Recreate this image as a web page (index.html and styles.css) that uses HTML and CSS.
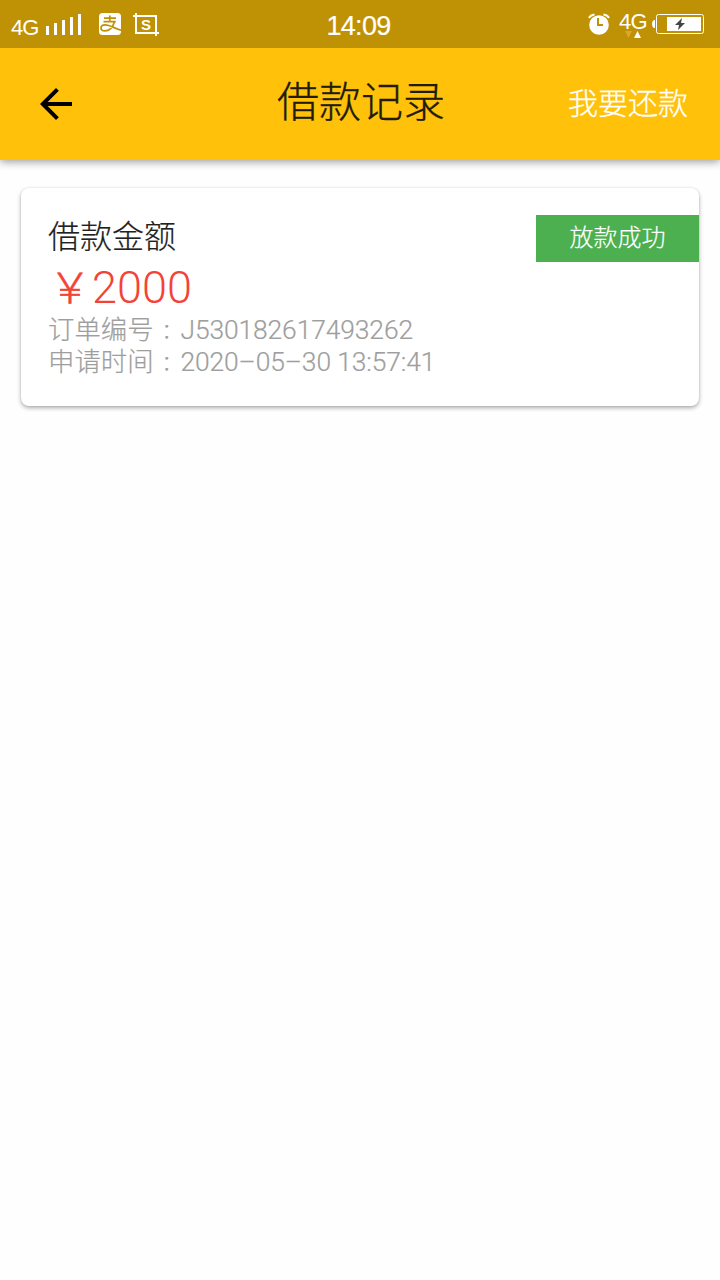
FILE: index.html
```html
<!DOCTYPE html>
<html lang="zh-CN">
<head>
<meta charset="utf-8">
<title>借款记录</title>
<link rel="stylesheet" href="styles.css">
</head>
<body>
<header class="status">
  <div class="status-left">
    <span class="net">4G</span>
    <svg class="signal" width="36" height="22" viewBox="0 0 36 22" fill="#fff"><path d="M0 12h3v9H0zM8 9h3v12H8zM16 6h3v15h-3zM24 3h3v18h-3zM32 0h3v21h-3z"/></svg>
    <svg class="pay" width="22" height="22" viewBox="0 0 22 22"><rect width="22" height="22" rx="3.5" fill="#fff"/><path d="M5 5.200h12M10.800 2.500v6M4.500 8.700h12.300M15.300 9c-1.300 5.500-5.300 8.900-9.300 8.900-2.500 0-4-1.200-4-2.900 0-2 1.800-3.100 4.200-3.100 4.500 0 9.500 3.600 15.800 5.200" fill="none" stroke="#bf9105" stroke-width="1.700"/></svg>
    <svg class="shot" width="26" height="24" viewBox="0 0 26 24" fill="none" stroke="#fff" stroke-width="2"><path d="M0 3h23v17M3 0v20h23M23 20v3"/><text x="13" y="16.500" class="shot-letter">S</text></svg>
  </div>
  <span class="clock">14:09</span>
  <div class="status-right">
    <svg class="alarm" width="22" height="22" viewBox="0 0 22 22"><circle cx="11" cy="12" r="9.800" fill="#fff"/><path d="M1 5Q2.500 2 6.500 1.500M21 5Q19.500 2 15.500 1.500" fill="none" stroke="#fff" stroke-width="2"/><path d="M10 5v7h5" fill="none" stroke="#bf9105" stroke-width="2"/></svg>
    <div class="data"><span>4G</span><svg width="18" height="7" viewBox="0 0 18 7"><path d="M1 0h7L4.500 7z" fill="#d9a72c"/><path d="M10 7h7L13.500 0z" fill="#fff"/></svg></div>
    <svg class="battery" width="52" height="20" viewBox="0 0 52 20"><path d="M3 6v8H2Q0 13 0 10t2-4z" fill="#fff"/><rect x="4.500" y=".5" width="47" height="19" rx="2" fill="none" stroke="#fff"/><path d="M15 3h34v14H15z" fill="#fff"/><path d="M30 4l-7 7h4l-1 5 7-7h-4z" fill="#444"/></svg>
  </div>
</header>
<nav class="appbar">
  <svg class="back" width="32" height="32" viewBox="4 4 16 16"><path d="M20 11H7.830l5.590-5.590L12 4l-8 8 8 8 1.410-1.410L7.830 13H20v-2z"/></svg>
  <h1 class="title">借款记录</h1>
  <span class="repay">我要还款</span>
</nav>
<main class="content">
  <section class="card">
    <div class="info">
      <div class="label">借款金额</div>
      <div class="amount"><span class="yen">￥</span>2000</div>
      <div class="meta">订单编号<span class="colon" lang="zh-TW">：</span><span class="order">J530182617493262</span></div>
      <div class="meta">申请时间<span class="colon" lang="zh-TW">：</span><span class="time">2020–05–30 13:57:41</span></div>
    </div>
    <div class="tag">放款成功</div>
  </section>
</main>
</body>
</html>
```
FILE: styles.css
```css
* { box-sizing: border-box; }
body {
  margin: 0;
  min-height: 1280px;
  background: #fefefe;
  font-family: Roboto, "Noto Sans CJK SC", sans-serif;
  font-weight: 300;
}
svg { display: block; flex: none; }
.status {
  position: relative;
  z-index: 1;
  height: 48px;
  padding: 0 16px 0 11px;
  display: grid;
  grid-template-columns: 1fr auto 1fr;
  background: #bf9105;
  color: #fff;
  font-family: "Liberation Sans", sans-serif;
  font-weight: 400;
}
.status-left, .status-right { display: flex; align-items: flex-start; }
.status-right { justify-content: flex-end; }
.net { font-size: 22px; line-height: 24px; margin-top: 16px; width: 35px; letter-spacing: -1px; }
.signal { margin-top: 14px; }
.pay { margin: 13px 12px 0 17px; }
.shot { margin-top: 13px; }
.shot-letter { font: bold 15px "Liberation Sans", sans-serif; text-anchor: middle; fill: #fff; stroke: none; }
.clock { font-size: 27px; line-height: 30px; margin: 11px -1px 0 1px; letter-spacing: -0.7px; -webkit-text-stroke: 0.2px #fff; }
.alarm { margin: 13px 9px 0 0; }
.data { width: 33px; margin-top: 11px; font-size: 22px; line-height: 22px; letter-spacing: -0.8px; }
.data svg { margin: -2px 0 0 5px; }
.battery { margin-top: 14px; }
.appbar {
  height: 112px;
  padding: 0 32px 0 40px;
  display: grid;
  grid-template-columns: 1fr auto 1fr;
  align-items: center;
  background: #ffc10a;
  box-shadow: 0 2px 8px rgba(0, 0, 0, .38);
}
.title { margin: 0 3px 3px -3px; font-size: 42px; line-height: 60px; font-weight: 300; color: #211b08; -webkit-text-stroke: 0.3px; }
.repay { justify-self: end; font-size: 30px; line-height: 44px; color: #fff; -webkit-text-stroke: 0.3px; }
.content { padding: 28px 21px; }
.card {
  height: 218px;
  padding: 27px 0 0 27px;
  display: flex;
  justify-content: space-between;
  align-items: flex-start;
  background: #fff;
  border-radius: 8px;
  box-shadow: 0 2px 4px rgba(0, 0, 0, .32), 0 0 2px rgba(0, 0, 0, .08);
}
.label { font-size: 32px; line-height: 45px; color: #212121; -webkit-text-stroke: 0.2px; }
.amount { height: 54px; font-size: 45px; line-height: 56px; letter-spacing: 0; color: #f44336; }
.yen { display: inline-block; width: 44px; text-align: center; font-size: 42px; font-family: "Noto Sans CJK SC", sans-serif; line-height: 1; -webkit-text-stroke: 0.6px; }
.meta { font-size: 26.400px; line-height: 32px; height: 32px; color: #9e9e9e; white-space: nowrap; -webkit-text-stroke: 0.2px; }
.colon { display: inline-block; width: 26.400px; text-align: center; font-size: 21px; font-family: "Noto Sans CJK TC", sans-serif; line-height: 1; }
.order, .time { letter-spacing: -0.1px; margin-left: 0.5px; }
.tag { width: 163px; height: 47px; line-height: 46px; text-align: center; font-size: 24px; color: #fff; background: #4caf50; -webkit-text-stroke: 0.2px; }
```
